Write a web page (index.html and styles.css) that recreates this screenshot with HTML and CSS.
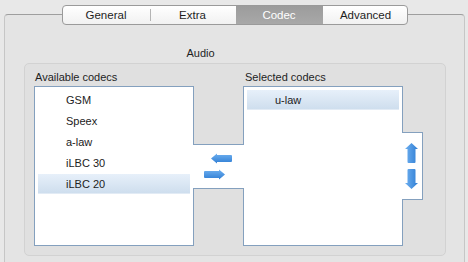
FILE: index.html
```html
<!DOCTYPE html>
<html lang="en">
<head>
    <meta charset="UTF-8">
    <title>Codec settings</title>
    <link rel="stylesheet" href="styles.css">
</head>
<body>
    <div class="tabview">
        <div class="tabs">
            <button class="tab">General</button>
            <button class="tab">Extra</button>
            <button class="tab active">Codec</button>
            <button class="tab">Advanced</button>
        </div>

        <div class="section-title">Audio</div>

        <div class="group">
            <div class="labels">
                <div class="label">Available codecs</div>
                <div class="label">Selected codecs</div>
            </div>

            <div class="lists">
                <ul class="list">
                    <li>GSM</li>
                    <li>Speex</li>
                    <li>a-law</li>
                    <li>iLBC 30</li>
                    <li class="selected">iLBC 20</li>
                </ul>

                <div class="move-panel">
                    <svg class="arrow arrow-left" width="21" height="11" viewBox="0 0 21 11">
                        <path d="M0 5.5 L6 0.5 V2 H20 Q21 2 21 3 V8 Q21 9 20 9 H6 V10.5 Z" fill="url(#gh)"/>
                    </svg>
                    <svg class="arrow arrow-right" width="21" height="11" viewBox="0 0 21 11">
                        <path d="M21 5.5 L15 0.5 V2 H1 Q0 2 0 3 V8 Q0 9 1 9 H15 V10.5 Z" fill="url(#gh)"/>
                    </svg>
                </div>

                <ul class="list">
                    <li class="selected">u-law</li>
                </ul>

                <div class="order-panel">
                    <svg class="arrow arrow-up" width="13" height="20" viewBox="0 0 13 20">
                        <path d="M6.5 0 L13 6 H10.5 V19 Q10.5 20 9.5 20 H3.5 Q2.5 20 2.5 19 V6 H0 Z" fill="url(#gv)"/>
                    </svg>
                    <svg class="arrow arrow-down" width="13" height="20" viewBox="0 0 13 20">
                        <path d="M6.5 20 L13 14 H10.5 V1 Q10.5 0 9.5 0 H3.5 Q2.5 0 2.5 1 V14 H0 Z" fill="url(#gv)"/>
                    </svg>
                </div>
            </div>
        </div>
    </div>

    <svg width="0" height="0" class="defs">
        <defs>
            <linearGradient id="gh" x1="0" y1="0" x2="0" y2="1">
                <stop offset="0" stop-color="#6fb0f0"/>
                <stop offset="1" stop-color="#2f7ed4"/>
            </linearGradient>
            <linearGradient id="gv" x1="0" y1="0" x2="1" y2="0">
                <stop offset="0" stop-color="#6fb0f0"/>
                <stop offset="1" stop-color="#2f7ed4"/>
            </linearGradient>
        </defs>
    </svg>
</body>
</html>
```

FILE: styles.css
```css
body {
    margin: 0;
    padding: 14px 3px 0 4px;
    font-family: "Liberation Sans", Arial, sans-serif;
    font-size: 11px;
    color: #1e1e1e;
    background-color: #e8e8e8;
    overflow: hidden;
}

.tabview {
    height: 248px;
    box-sizing: border-box;
    border: 1px solid #c6c6c6;
    border-top-color: #9e9e9e;
    border-bottom: none;
    border-radius: 4px 4px 0 0;
    background-color: #e4e4e4;
}

/* Segmented tab bar, sits over the top border */
.tabs {
    display: grid;
    grid-template-columns: 87px 86px 87px 86px;
    width: 346px;
    height: 20px;
    margin: -10px auto 0;
    box-sizing: border-box;
    border: 1px solid #9a9a9a;
    border-radius: 4px;
    overflow: hidden;
    background: linear-gradient(#ffffff, #f1f1f1);
}

.tab {
    font-family: inherit;
    font-size: 11.5px;
    color: #1e1e1e;
    border: none;
    padding: 0;
    background: transparent;
    line-height: 18px;
    position: relative;
}

.tab + .tab::before {
    content: "";
    position: absolute;
    left: 0;
    top: 3px;
    bottom: 3px;
    width: 1px;
    background: #b4b4b4;
}

.tab.active {
    background: linear-gradient(#9c9c9c, #a8a8a8);
    color: #fff;
}

.tab.active::before,
.tab.active + .tab::before {
    display: none;
}

.section-title {
    margin: 21px 0 3px;
    padding-right: 68px;
    text-align: center;
    line-height: 14px;
}

.group {
    margin: 0 18px 0 19px;
    padding: 6px 9px 9px;
    border: 1px solid #d2d2d2;
    border-radius: 5px;
    background-color: #e0e0e0;
}

.labels {
    display: grid;
    grid-template-columns: 210px 1fr;
    line-height: 14px;
    margin-bottom: 2px;
}

.label {
    padding-left: 1px;
}

.lists {
    display: flex;
    align-items: center;
}

.list {
    list-style: none;
    margin: 0;
    padding: 3px;
    width: 160px;
    height: 160px;
    flex: none;
    box-sizing: border-box;
    border: 1px solid #84a0be;
    background: #fff;
}

.list li {
    height: 20px;
    line-height: 20px;
    margin-bottom: 1px;
    padding-left: 28px;
    color: #222;
}

.list li.selected {
    background: linear-gradient(#e7f0fa, #cddded);
    box-shadow: inset 0 -1px 0 #e2ebf5;
}

.move-panel {
    position: relative;
    z-index: 1;
    flex: none;
    width: 51px;
    height: 45px;
    margin: 0 -1px;
    box-sizing: border-box;
    padding-top: 8px;
    border-top: 1px solid #84a0be;
    border-bottom: 1px solid #84a0be;
    background: #fff;
    display: flex;
    flex-direction: column;
    gap: 5px;
}

.order-panel {
    position: relative;
    z-index: 1;
    flex: none;
    width: 21px;
    height: 68px;
    margin-left: -1px;
    box-sizing: border-box;
    padding: 10px 0 0 3px;
    border: 1px solid #84a0be;
    border-left: none;
    background: #fff;
    display: flex;
    flex-direction: column;
    gap: 6px;
}

.arrow {
    display: block;
}

.arrow-left {
    margin-left: 18px;
}

.arrow-right {
    margin-left: 11px;
}

.defs {
    position: absolute;
}
```
